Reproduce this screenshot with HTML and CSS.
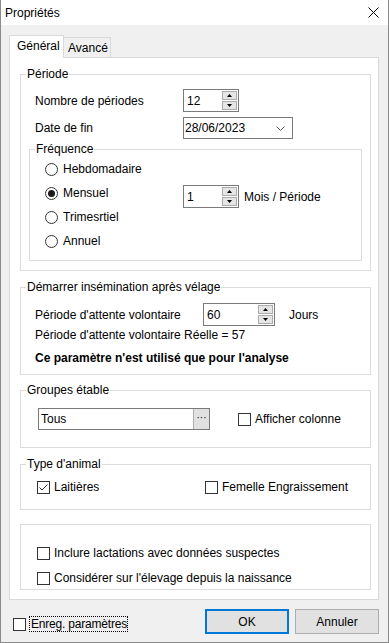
FILE: index.html
```html
<!DOCTYPE html>
<html lang="fr">
<head>
  <meta charset="UTF-8">
  <title>Propriétés</title>
  <link rel="stylesheet" href="styles.css">
</head>
<body>
  <div class="window">
    <div class="titlebar">
      <span class="title">Propriétés</span>
      <svg class="close" width="11" height="11" viewBox="0 0 11 11">
        <path d="M0.5 0.5 L10.5 10.5 M10.5 0.5 L0.5 10.5" stroke="#000" stroke-width="1" fill="none"/>
      </svg>
    </div>

    <div class="client">
      <!-- Onglets -->
      <div class="tabs">
        <div class="tab active">Général</div>
        <div class="tab">Avancé</div>
      </div>

      <div class="panel">
        <!-- Période -->
        <fieldset class="group">
          <legend>Période</legend>
          <div class="group-body periode">
            <div class="field-row">
              <span class="field-label w148">Nombre de périodes</span>
              <div class="spin w56">
                <span class="spin-value">12</span>
                <span class="spin-btns">
                  <span class="spin-btn"><svg width="5" height="3" viewBox="0 0 5 3"><path d="M0 3 L2.5 0 L5 3 Z" fill="#000"/></svg></span>
                  <span class="spin-btn"><svg width="5" height="3" viewBox="0 0 5 3"><path d="M0 0 L2.5 3 L5 0 Z" fill="#000"/></svg></span>
                </span>
              </div>
            </div>
            <div class="field-row date-row">
              <span class="field-label w148">Date de fin</span>
              <div class="datebox">
                <span>28/06/2023</span>
                <svg width="9" height="5" viewBox="0 0 9 5"><path d="M0.5 0.5 L4.5 4.5 L8.5 0.5" stroke="#555" stroke-width="1" fill="none"/></svg>
              </div>
            </div>

            <fieldset class="group frequence">
              <legend>Fréquence</legend>
              <div class="group-body freq-body">
                <div class="radio-row">
                  <span class="radio"><span class="radio-circle"></span>Hebdomadaire</span>
                </div>
                <div class="radio-row">
                  <span class="radio"><span class="radio-circle"><span class="radio-dot"></span></span>Mensuel</span>
                  <div class="mois">
                    <div class="spin w56">
                      <span class="spin-value">1</span>
                      <span class="spin-btns">
                        <span class="spin-btn"><svg width="5" height="3" viewBox="0 0 5 3"><path d="M0 3 L2.5 0 L5 3 Z" fill="#000"/></svg></span>
                        <span class="spin-btn"><svg width="5" height="3" viewBox="0 0 5 3"><path d="M0 0 L2.5 3 L5 0 Z" fill="#000"/></svg></span>
                      </span>
                    </div>
                    <span>Mois / Période</span>
                  </div>
                </div>
                <div class="radio-row">
                  <span class="radio"><span class="radio-circle"></span>Trimesrtiel</span>
                </div>
                <div class="radio-row">
                  <span class="radio"><span class="radio-circle"></span>Annuel</span>
                </div>
              </div>
            </fieldset>
          </div>
        </fieldset>

        <!-- Insémination -->
        <fieldset class="group insemination">
          <legend>Démarrer insémination après vélage</legend>
          <div class="group-body insem-body">
            <div class="field-row">
              <span class="field-label w168">Période d'attente volontaire</span>
              <div class="spin w72">
                <span class="spin-value">60</span>
                <span class="spin-btns">
                  <span class="spin-btn"><svg width="5" height="3" viewBox="0 0 5 3"><path d="M0 3 L2.5 0 L5 3 Z" fill="#000"/></svg></span>
                  <span class="spin-btn"><svg width="5" height="3" viewBox="0 0 5 3"><path d="M0 0 L2.5 3 L5 0 Z" fill="#000"/></svg></span>
                </span>
              </div>
              <span class="jours">Jours</span>
            </div>
            <div class="reelle">Période d'attente volontaire Réelle = 57</div>
            <div class="note">Ce paramètre n'est utilisé que pour l'analyse</div>
          </div>
        </fieldset>

        <!-- Groupes étable -->
        <fieldset class="group groupes">
          <legend>Groupes étable</legend>
          <div class="group-body groupes-body">
            <div class="combo">
              <span class="combo-value">Tous</span>
              <span class="combo-btn">···</span>
            </div>
            <span class="checkbox afficher"><span class="check"></span>Afficher colonne</span>
          </div>
        </fieldset>

        <!-- Type d'animal -->
        <fieldset class="group animal">
          <legend>Type d'animal</legend>
          <div class="group-body animal-body">
            <span class="checkbox laitieres">
              <span class="check">
                <svg width="11" height="11" viewBox="0 0 11 11"><path d="M1.5 5.5 L4 8 L9.5 2.5" stroke="#333" stroke-width="1" fill="none"/></svg>
              </span>Laitières
            </span>
            <span class="checkbox"><span class="check"></span>Femelle Engraissement</span>
          </div>
        </fieldset>

        <!-- Options -->
        <fieldset class="group options">
          <div class="group-body options-body">
            <span class="checkbox"><span class="check"></span>Inclure lactations avec données suspectes</span>
            <span class="checkbox"><span class="check"></span>Considérer sur l'élevage depuis la naissance</span>
          </div>
        </fieldset>
      </div>

      <div class="bottom-bar">
        <span class="checkbox save"><span class="check"></span><span class="focus">Enreg. paramètres</span></span>
        <div class="buttons">
          <button class="btn default">OK</button>
          <button class="btn">Annuler</button>
        </div>
      </div>
    </div>
  </div>
</body>
</html>
```

FILE: styles.css
```css
* {
  box-sizing: border-box;
}

body {
  margin: 0;
  font-family: "Liberation Sans", Arial, sans-serif;
  font-size: 12px;
  line-height: 16px;
  color: #000;
  background: #fff;
}

.window {
  width: 389px;
  height: 643px;
  border: 1px solid #8a8a8a;
  border-top: none;
  display: flex;
  flex-direction: column;
  background: #f0f0f0;
}

.titlebar {
  height: 25px;
  background: #fff;
  display: flex;
  align-items: center;
  padding: 0 9px 0 4px;
}

.title {
  flex: 1;
}

.client {
  flex: 1;
  padding: 10px 9px 0 8px;
}

/* Onglets */
.tabs {
  display: flex;
  align-items: flex-end;
  height: 22px;
}

.tab {
  height: 20px;
  width: 47px;
  padding: 2px 4px 0 4px;
  border: 1px solid #d9d9d9;
  border-left: none;
  border-bottom: none;
  background: #f0f0f0;
}

.tab.active {
  position: relative;
  z-index: 1;
  height: 23px;
  width: 55px;
  margin-bottom: -1px;
  padding-left: 7px;
  background: #fff;
  border-left: 1px solid #d9d9d9;
}

.panel {
  width: 370px;
  background: #fff;
  border: 1px solid #d9d9d9;
  padding: 8px 7px 9px 10px;
}

/* Cadres */
.group {
  margin: 0;
  padding: 0;
  border: 1px solid #dcdcdc;
  min-width: 0;
}

.group legend {
  padding: 0 1px;
  margin-left: 5px;
  line-height: 16px;
}

.periode {
  padding: 7px 8px 9px 8px;
}

.field-row {
  display: flex;
  align-items: center;
  height: 23px;
}

.periode .field-row {
  margin-left: 6px;
}

.date-row {
  margin-top: 5px;
  height: 22px;
}

.field-label.w148 {
  width: 148px;
}

.field-label.w168 {
  width: 168px;
}

.spin {
  display: flex;
  align-items: stretch;
  height: 23px;
  border: 1px solid #7a7a7a;
  background: #fff;
  padding-left: 3px;
}

.spin.w56 {
  width: 56px;
}

.spin.w72 {
  width: 72px;
}

.spin-value {
  flex: 1;
  align-self: center;
}

.spin-btns {
  display: flex;
  flex-direction: column;
  gap: 1px;
  padding: 1px 1px 1px 0;
}

.spin-btn {
  flex: 1;
  width: 15px;
  display: flex;
  align-items: center;
  justify-content: center;
  background: #e5e5e5;
  border: 1px solid #acacac;
}

.datebox {
  width: 110px;
  height: 22px;
  border: 1px solid #7a7a7a;
  display: flex;
  align-items: center;
  justify-content: space-between;
  padding: 0 7px 0 1px;
}

.frequence {
  margin-top: 2px;
}

.freq-body {
  padding: 0 0 7px 15px;
}

.radio-row {
  display: flex;
  height: 24px;
}

.radio {
  display: flex;
  align-items: center;
  gap: 5px;
  width: 138px;
  height: 24px;
}

.radio-circle {
  width: 13px;
  height: 13px;
  border: 1px solid #333;
  border-radius: 50%;
  display: flex;
  align-items: center;
  justify-content: center;
}

.radio-dot {
  width: 7px;
  height: 7px;
  border-radius: 50%;
  background: #1a1a1a;
}

.mois {
  display: flex;
  align-items: center;
  gap: 5px;
  margin-top: 4px;
  height: 23px;
}

.insemination {
  margin-top: 8px;
}

.insem-body {
  padding: 8px 0 8px 14px;
}

.jours {
  margin-left: 14px;
}

.reelle {
  margin-top: 1px;
}

.note {
  margin-top: 7px;
  font-weight: bold;
}

.groupes {
  margin-top: 7px;
}

.groupes-body {
  display: flex;
  align-items: center;
  padding: 10px 0 17px 17px;
}

.combo {
  width: 172px;
  height: 22px;
  border: 1px solid #7a7a7a;
  display: flex;
  align-items: stretch;
  padding: 0 0 0 2px;
}

.combo-value {
  flex: 1;
  align-self: center;
}

.combo-btn {
  width: 16px;
  margin: 0 0 0 0;
  background: #e1e1e1;
  border-left: 1px solid #adadad;
  font-size: 10px;
  line-height: 18px;
  text-align: center;
}

.afficher {
  margin-left: 28px;
}

/* Cases à cocher */
.checkbox {
  display: flex;
  align-items: center;
  gap: 4px;
  height: 16px;
}

.check {
  width: 13px;
  height: 13px;
  border: 1px solid #333;
  background: #fff;
  display: flex;
  align-items: center;
  justify-content: center;
}

.animal {
  margin-top: 8px;
}

.animal-body {
  display: flex;
  padding: 7px 0 14px 16px;
}

.laitieres {
  width: 168px;
}

.options {
  margin-top: 14px;
}

.options-body {
  display: flex;
  flex-direction: column;
  gap: 9px;
  padding: 20px 0 3px 16px;
}

/* Bas de fenêtre */
.bottom-bar {
  display: flex;
  align-items: flex-start;
}

.save {
  margin: 16px 0 0 4px;
  gap: 3px;
}

.focus {
  border: 1px dotted #000;
  line-height: 14px;
  padding: 0 0 0 1px;
  letter-spacing: -0.2px;
}

.buttons {
  margin-left: auto;
  margin-top: 9px;
  display: flex;
  gap: 6px;
}

.btn {
  width: 84px;
  height: 25px;
  font-family: inherit;
  font-size: 12px;
  background: #e1e1e1;
  border: 1px solid #adadad;
  padding: 0;
  color: #000;
}

.btn.default {
  border: 2px solid #0078d7;
}
```
